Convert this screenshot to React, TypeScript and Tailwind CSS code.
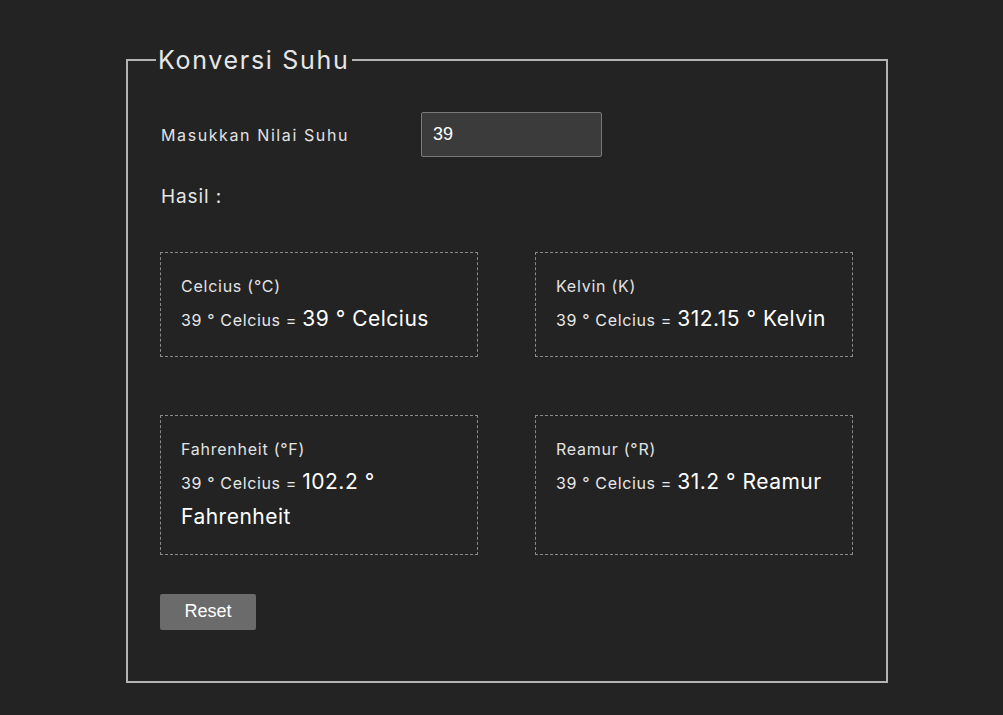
import React, { useState } from "react";

const font = { fontFamily: "Inter, 'Noto Sans', sans-serif" };

function ResultCard({ title, from, value }: { title: string; from: string; value: string }) {
  return (
    <div className="border border-dashed border-[#8a8a8a] px-[20px] pt-[21px] pb-[17px]">
      <div className="text-[16px] leading-6 text-[#e2e2e2] mb-[5px] tracking-[0.75px]">{title}</div>
      <p className="text-[16px] leading-[35.5px] text-[#e8e8e8]">
        <span className="leading-none tracking-[0.65px]">{from} = </span>
        <span className="text-[21px] leading-none text-white tracking-[0.5px]">{value}</span>
      </p>
    </div>
  );
}

export default function App() {
  const [suhu, setSuhu] = useState("39");
  const c = parseFloat(suhu) || 0;
  const round = (n: number) => Math.round(n * 100) / 100;

  return (
    <div className="min-h-[715px] bg-[#232323] pl-[126px] pt-[46px]" style={font}>
      <fieldset className="w-[762px] h-[637px] border-2 border-[#b3b3b3] p-0 m-0">
        <legend className="ml-[28px] px-[2px] text-[25px] leading-[28px] text-[#e6e6e6] tracking-[1.7px]">
          Konversi Suhu
        </legend>

        <div className="px-[32px]">
          <div className="flex items-center mt-[38px]">
            <label className="w-[261px] pl-[1px] text-[16px] text-[#e2e2e2] tracking-[1.6px]">Masukkan Nilai Suhu</label>
            <input
              value={suhu}
              onChange={(e) => setSuhu(e.target.value)}
              className="w-[181px] h-[45px] bg-[#3b3b3b] border border-[#7a7a7a] rounded-[2px] px-[11px] text-[18px] text-white outline-none"
              style={{ fontFamily: "'Liberation Sans', Arial, sans-serif" }}
            />
          </div>

          <div className="mt-[28px] pl-[1px] text-[19px] leading-6 text-[#e6e6e6] tracking-[0.9px]">Hasil :</div>

          <div className="grid grid-cols-[318px_318px] gap-x-[57px] gap-y-[58px] mt-[43px]">
            <ResultCard title="Celcius (°C)" from={`${suhu} ° Celcius`} value={`${round(c)} ° Celcius`} />
            <ResultCard title="Kelvin (K)" from={`${suhu} ° Celcius`} value={`${round(c + 273.15)} ° Kelvin`} />
            <ResultCard title="Fahrenheit (°F)" from={`${suhu} ° Celcius`} value={`${round((c * 9) / 5 + 32)} ° Fahrenheit`} />
            <ResultCard title="Reamur (°R)" from={`${suhu} ° Celcius`} value={`${round((c * 4) / 5)} ° Reamur`} />
          </div>

          <button
            onClick={() => setSuhu("")}
            className="mt-[39px] w-[96px] h-[36px] bg-[#6b6b6b] rounded-[2px] text-[18px] text-white"
            style={{ fontFamily: "'Liberation Sans', Arial, sans-serif" }}
          >
            Reset
          </button>
        </div>
      </fieldset>
    </div>
  );
}
